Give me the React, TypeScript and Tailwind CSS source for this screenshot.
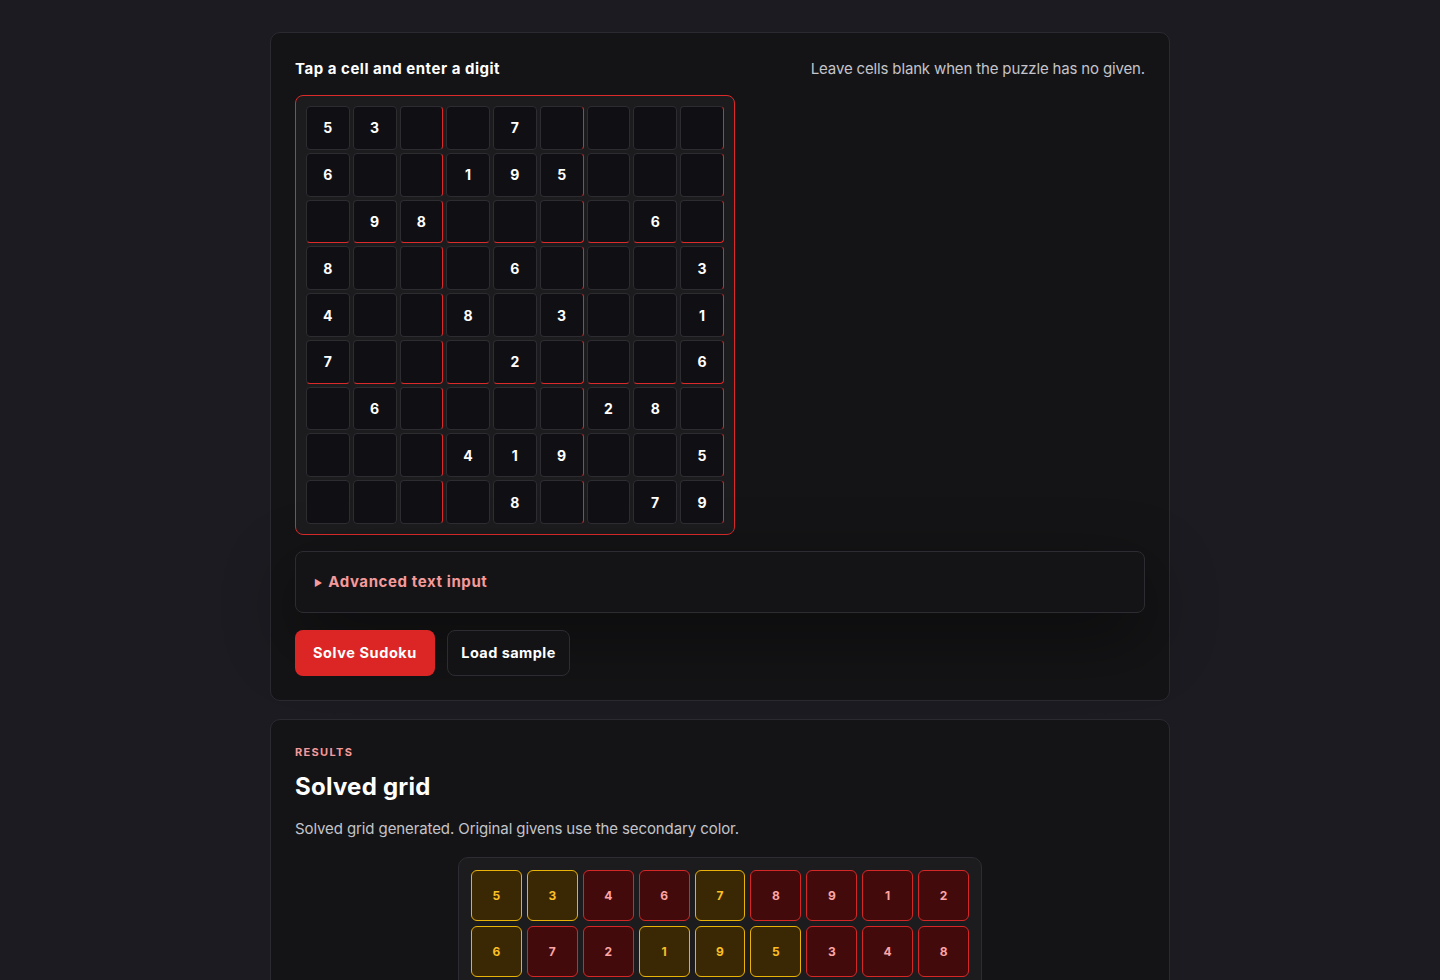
import React from "react";

const puzzle: (number | null)[][] = [
  [5, 3, null, null, 7, null, null, null, null],
  [6, null, null, 1, 9, 5, null, null, null],
  [null, 9, 8, null, null, null, null, 6, null],
  [8, null, null, null, 6, null, null, null, 3],
  [4, null, null, 8, null, 3, null, null, 1],
  [7, null, null, null, 2, null, null, null, 6],
  [null, 6, null, null, null, null, 2, 8, null],
  [null, null, null, 4, 1, 9, null, null, 5],
  [null, null, null, null, 8, null, null, 7, 9],
];

const solved: number[][] = [
  [5, 3, 4, 6, 7, 8, 9, 1, 2],
  [6, 7, 2, 1, 9, 5, 3, 4, 8],
  [1, 9, 8, 3, 4, 2, 5, 6, 7],
  [8, 5, 9, 7, 6, 1, 4, 2, 3],
  [4, 2, 6, 8, 5, 3, 7, 9, 1],
  [7, 1, 3, 9, 2, 4, 8, 5, 6],
  [9, 6, 1, 5, 3, 7, 2, 8, 4],
  [2, 8, 7, 4, 1, 9, 6, 3, 5],
  [3, 4, 5, 2, 8, 6, 1, 7, 9],
];

const font = { fontFamily: "Inter, 'Noto Sans', sans-serif" };

function InputCell({ v, r, c }: { v: number | null; r: number; c: number }) {
  const redRight = c % 3 === 2;
  const redBottom = r === 2 || r === 5;
  return (
    <div
      className={
        "aspect-square rounded-[4px] border bg-[#101014] flex items-center justify-center text-[14px] font-bold text-white tracking-[0.02em] " +
        (redRight ? "border-r-[#dc2a2a] " : "border-r-[#2c2c31] ") +
        (redBottom ? "border-b-[#dc2a2a] " : "border-b-[#2c2c31] ") +
        "border-t-[#2c2c31] border-l-[#2c2c31]"
      }
    >
      {v ?? ""}
    </div>
  );
}

function SolvedCell({ v, given }: { v: number; given: boolean }) {
  return (
    <div
      className={
        "h-[51px] rounded-[6px] border flex items-center justify-center text-[12px] font-bold " +
        (given
          ? "bg-[#3a2804] border-[#eab308] text-[#fbbf24]"
          : "bg-[#430a0c] border-[#d62727] text-[#fca5a5]")
      }
    >
      {v}
    </div>
  );
}

export default function App() {
  return (
    <div className="min-h-screen bg-[#1c1b21] pt-8 pb-10" style={font}>
      <div className="w-[900px] mx-auto flex flex-col gap-[18px]">
        {/* Input card */}
        <div className="rounded-[10px] border border-[#2a2a30] bg-[#141416] px-6 pt-6 pb-6">
          <div className="flex items-start justify-between">
            <h2 className="text-[15px] leading-[24px] font-bold text-white tracking-[0.035em]">
              Tap a cell and enter a digit
            </h2>
            <p className="text-[15px] leading-[24px] text-[#c4c4ca] tracking-[-0.15px]">
              Leave cells blank when the puzzle has no given.
            </p>
          </div>
          <div className="mt-[14px] w-[440px] h-[440px] rounded-[8px] border border-[#dc2a2a] bg-[#1c1c1f] p-[10px]">
            <div className="grid grid-cols-9 gap-[3px]">
              {puzzle.map((row, r) =>
                row.map((v, c) => <InputCell key={r + "-" + c} v={v} r={r} c={c} />)
              )}
            </div>
          </div>
          <div className="mt-[16px] h-[62px] rounded-[8px] border border-[#2c2c32] bg-[#141416] shadow-[0_24px_70px_rgba(0,0,0,0.45)] flex items-center pl-[18px] pt-[1px]">
            <span className="text-[#f59a9a] text-[9px] mr-[6px]">▶</span>
            <span className="text-[#f59a9a] text-[15px] font-bold tracking-[0.04em]">Advanced text input</span>
          </div>
          <div className="mt-[17px] flex gap-3">
            <button className="h-[46px] w-[140px] rounded-[8px] bg-[#dc2626] text-white text-[14.5px] font-bold tracking-[0.04em]">
              Solve Sudoku
            </button>
            <button className="h-[46px] w-[123px] rounded-[8px] border border-[#2c2c32] bg-[#131316] text-white text-[14.5px] font-bold tracking-[0.03em]">
              Load sample
            </button>
          </div>
        </div>

        {/* Results card */}
        <div className="rounded-[10px] border border-[#2a2a30] bg-[#141416] px-6 pt-[25px] pb-8">
          <div className="text-[11px] leading-[14px] font-bold tracking-[0.12em] text-[#f59a9a]">
            RESULTS
          </div>
          <h3 className="mt-[13px] text-[24px] leading-[30px] font-bold text-white tracking-[0.01em]">Solved grid</h3>
          <p className="mt-[15px] text-[15px] leading-[24px] text-[#c4c4ca] tracking-[-0.1px]">
            Solved grid generated. Original givens use the secondary color.
          </p>
          <div className="mt-[16px] mx-auto w-[524px] rounded-[10px] border border-[#2c2c32] bg-[#1c1c1f] p-3">
            <div className="grid grid-cols-9 gap-[5px]">
              {solved.map((row, r) =>
                row.map((v, c) => (
                  <SolvedCell key={r + "-" + c} v={v} given={puzzle[r][c] !== null} />
                ))
              )}
            </div>
          </div>
        </div>
      </div>
    </div>
  );
}
